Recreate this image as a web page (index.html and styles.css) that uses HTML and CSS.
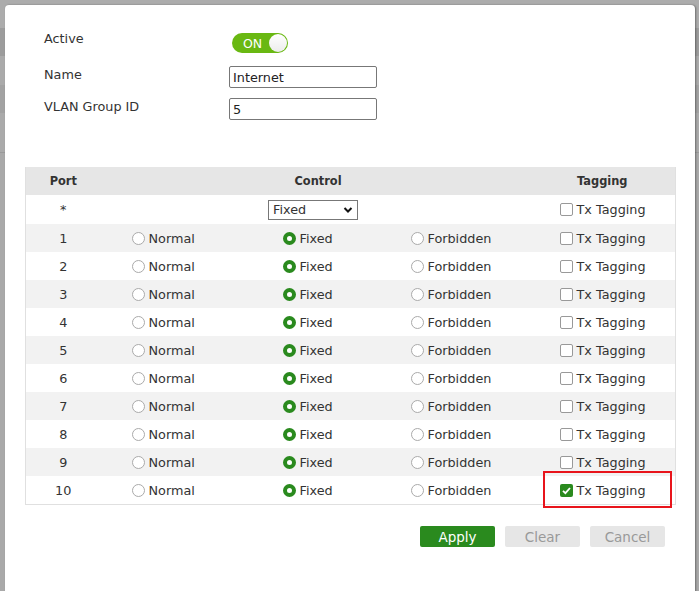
FILE: index.html
```html
<!DOCTYPE html>
<html lang="en">

<head>
  <meta charset="UTF-8">
  <meta name="viewport" content="width=device-width, initial-scale=1.0">
  <title>VLAN</title>
  <link rel="stylesheet" href="styles.css">
</head>

<body>
  <div class="modal">
    <div class="form">
      <div class="row">
        <div class="label">Active</div>
        <div class="toggle"><span>ON</span><i></i></div>
      </div>
      <div class="row">
        <div class="label">Name</div>
        <input type="text" class="field" value="Internet">
      </div>
      <div class="row">
        <div class="label">VLAN Group ID</div>
        <input type="text" class="field" value="5">
      </div>
    </div>

    <table class="ports">
      <colgroup>
        <col class="w-port">
        <col class="w-normal">
        <col class="w-fixed">
        <col class="w-forb">
        <col class="w-tag">
      </colgroup>
      <tr class="head">
        <th class="c-port">Port</th>
        <th colspan="3">Control</th>
        <th class="h-tag">Tagging</th>
      </tr>
      <tr class="all">
        <td class="c-port">*</td>
        <td colspan="3" class="c-all">
          <div class="select">
            <select>
              <option>Fixed</option>
              <option>Normal</option>
              <option>Forbidden</option>
            </select>
            <svg width="10" height="8" viewBox="0 0 10 8"><path d="M1.5 2 L5 5.5 L8.5 2" fill="none" stroke="#111" stroke-width="2"/></svg>
          </div>
        </td>
        <td class="c-tag"><span class="box"></span>Tx Tagging</td>
      </tr>
      <tr class="odd">
        <td class="c-port">1</td>
        <td class="c-normal"><span class="radio"></span>Normal</td>
        <td class="c-fixed"><span class="radio on"></span>Fixed</td>
        <td class="c-forb"><span class="radio"></span>Forbidden</td>
        <td class="c-tag"><span class="box"></span>Tx Tagging</td>
      </tr>
      <tr>
        <td class="c-port">2</td>
        <td class="c-normal"><span class="radio"></span>Normal</td>
        <td class="c-fixed"><span class="radio on"></span>Fixed</td>
        <td class="c-forb"><span class="radio"></span>Forbidden</td>
        <td class="c-tag"><span class="box"></span>Tx Tagging</td>
      </tr>
      <tr class="odd">
        <td class="c-port">3</td>
        <td class="c-normal"><span class="radio"></span>Normal</td>
        <td class="c-fixed"><span class="radio on"></span>Fixed</td>
        <td class="c-forb"><span class="radio"></span>Forbidden</td>
        <td class="c-tag"><span class="box"></span>Tx Tagging</td>
      </tr>
      <tr>
        <td class="c-port">4</td>
        <td class="c-normal"><span class="radio"></span>Normal</td>
        <td class="c-fixed"><span class="radio on"></span>Fixed</td>
        <td class="c-forb"><span class="radio"></span>Forbidden</td>
        <td class="c-tag"><span class="box"></span>Tx Tagging</td>
      </tr>
      <tr class="odd">
        <td class="c-port">5</td>
        <td class="c-normal"><span class="radio"></span>Normal</td>
        <td class="c-fixed"><span class="radio on"></span>Fixed</td>
        <td class="c-forb"><span class="radio"></span>Forbidden</td>
        <td class="c-tag"><span class="box"></span>Tx Tagging</td>
      </tr>
      <tr>
        <td class="c-port">6</td>
        <td class="c-normal"><span class="radio"></span>Normal</td>
        <td class="c-fixed"><span class="radio on"></span>Fixed</td>
        <td class="c-forb"><span class="radio"></span>Forbidden</td>
        <td class="c-tag"><span class="box"></span>Tx Tagging</td>
      </tr>
      <tr class="odd">
        <td class="c-port">7</td>
        <td class="c-normal"><span class="radio"></span>Normal</td>
        <td class="c-fixed"><span class="radio on"></span>Fixed</td>
        <td class="c-forb"><span class="radio"></span>Forbidden</td>
        <td class="c-tag"><span class="box"></span>Tx Tagging</td>
      </tr>
      <tr>
        <td class="c-port">8</td>
        <td class="c-normal"><span class="radio"></span>Normal</td>
        <td class="c-fixed"><span class="radio on"></span>Fixed</td>
        <td class="c-forb"><span class="radio"></span>Forbidden</td>
        <td class="c-tag"><span class="box"></span>Tx Tagging</td>
      </tr>
      <tr class="odd">
        <td class="c-port">9</td>
        <td class="c-normal"><span class="radio"></span>Normal</td>
        <td class="c-fixed"><span class="radio on"></span>Fixed</td>
        <td class="c-forb"><span class="radio"></span>Forbidden</td>
        <td class="c-tag"><span class="box"></span>Tx Tagging</td>
      </tr>
      <tr>
        <td class="c-port">10</td>
        <td class="c-normal"><span class="radio"></span>Normal</td>
        <td class="c-fixed"><span class="radio on"></span>Fixed</td>
        <td class="c-forb"><span class="radio"></span>Forbidden</td>
        <td class="c-tag">
          <span class="mark"></span>
          <span class="box on"><svg width="13" height="13" viewBox="0 0 13 13"><path d="M3 6.8 L5.4 9.2 L10 4" fill="none" stroke="#fff" stroke-width="1.8"/></svg></span>Tx Tagging
        </td>
      </tr>
    </table>

    <div class="actions">
      <input type="button" value="Apply" class="btn apply">
      <input type="button" value="Clear" class="btn">
      <input type="button" value="Cancel" class="btn">
    </div>
  </div>
</body>

</html>
```

FILE: styles.css
```css
body {
  margin: 0;
  height: 591px;
  overflow: hidden;
  font-family: "DejaVu Sans", sans-serif;
  font-size: 12.8px;
  color: #333;
  background: linear-gradient(#acacac 0 28px, #9c9c9c 28px 56px, #aaaaaa 56px 85px, #a2a2a2 85px 113px, #aaaaaa 113px 152px, #9a9a9a 152px 153px, #a9a9a9 153px);
}

.modal {
  margin: 5px 4px 0 5px;
  height: 600px;
  background: #fff;
  border-radius: 4px 4px 0 0;
  box-shadow: 1px 0 2px rgba(0, 0, 0, 0.35);
  padding: 25px 20px 0 20px;
  box-sizing: border-box;
}

.form {
  padding-left: 19px;
  display: flex;
  flex-direction: column;
  gap: 10px;
}

.row {
  display: flex;
  align-items: flex-start;
}

.row:first-child {
  margin-bottom: 3px;
}

.label {
  width: 185px;
  line-height: 18px;
}

.toggle {
  margin: 3px 0 0 3px;
  width: 56px;
  height: 20px;
  border-radius: 10px;
  background: #69b812;
  display: flex;
  align-items: center;
  justify-content: space-between;
  padding: 0 1px 0 11px;
  box-sizing: border-box;
}

.toggle span {
  color: #fff;
  font-size: 12.5px;
}

.toggle i {
  width: 18px;
  height: 18px;
  border-radius: 50%;
  background: linear-gradient(#fff, #ececec);
}

.field {
  width: 148px;
  height: 22px;
  margin: 0;
  box-sizing: border-box;
  border: 1px solid #777;
  border-radius: 2px;
  padding: 0 3px;
  font-family: "DejaVu Sans", sans-serif;
  font-size: 12.8px;
  color: #222;
}

.ports {
  margin-top: 47px;
  width: 650px;
  border-collapse: collapse;
  table-layout: fixed;
  border: 1px solid #e0e0e0;
  border-top: 0;
}

.w-port {
  width: 75px;
}

.w-normal {
  width: 150px;
}

.w-fixed {
  width: 135px;
}

.w-forb {
  width: 150px;
}

.w-tag {
  width: 140px;
}

.ports th {
  background: #e6e6e6;
  height: 28px;
  padding: 0;
  font-weight: bold;
  font-size: 11.4px;
  color: #333;
}

.ports td {
  height: 28px;
  padding: 0;
  white-space: nowrap;
}

.ports .all td {
  height: 29px;
}

.ports .odd td {
  background: #f2f2f2;
}

.ports .c-port {
  text-align: center;
}

.ports .h-tag {
  padding-right: 6px;
}

.ports .c-normal {
  padding-left: 31px;
}

.ports .c-fixed {
  padding-left: 32px;
}

.ports .c-forb {
  padding-left: 25px;
}

.ports .c-tag {
  padding-left: 24px;
  position: relative;
}

.c-all {
  text-align: center;
}

.select {
  display: inline-block;
  position: relative;
  vertical-align: middle;
  margin-left: -10px;
}

.select select {
  appearance: none;
  width: 90px;
  height: 20px;
  border: 1px solid #777;
  border-radius: 0;
  background: #fff;
  padding: 0 4px;
  font-family: "DejaVu Sans", sans-serif;
  font-size: 12.8px;
  color: #333;
  display: block;
}

.select svg {
  position: absolute;
  right: 5px;
  top: 6px;
}

.radio {
  display: inline-block;
  width: 13px;
  height: 13px;
  box-sizing: border-box;
  border: 1px solid #aaa;
  border-radius: 50%;
  background: #fff;
  vertical-align: -2px;
  margin-right: 4px;
}

.radio.on {
  border: 4px solid #2a8a1e;
}

.box {
  display: inline-block;
  width: 13px;
  height: 13px;
  box-sizing: border-box;
  border: 1px solid #999;
  border-radius: 2px;
  background: #fff;
  vertical-align: -2px;
  margin-right: 4px;
}

.box.on {
  border: 0;
  background: #2a8a1e;
}

.box svg {
  display: block;
}

.mark {
  position: absolute;
  left: 7px;
  top: -5px;
  width: 125px;
  height: 33px;
  border: 2px solid #e8141b;
}

.actions {
  display: flex;
  justify-content: flex-end;
  gap: 10px;
  padding-right: 10px;
  margin-top: 21px;
}

.btn {
  width: 75px;
  height: 21px;
  border: 0;
  border-radius: 2px;
  background: #e6e6e6;
  color: #999;
  font-family: "DejaVu Sans", sans-serif;
  font-size: 13.5px;
  padding: 0;
}

.btn.apply {
  background: #2a8a1e;
  color: #fff;
}
```
